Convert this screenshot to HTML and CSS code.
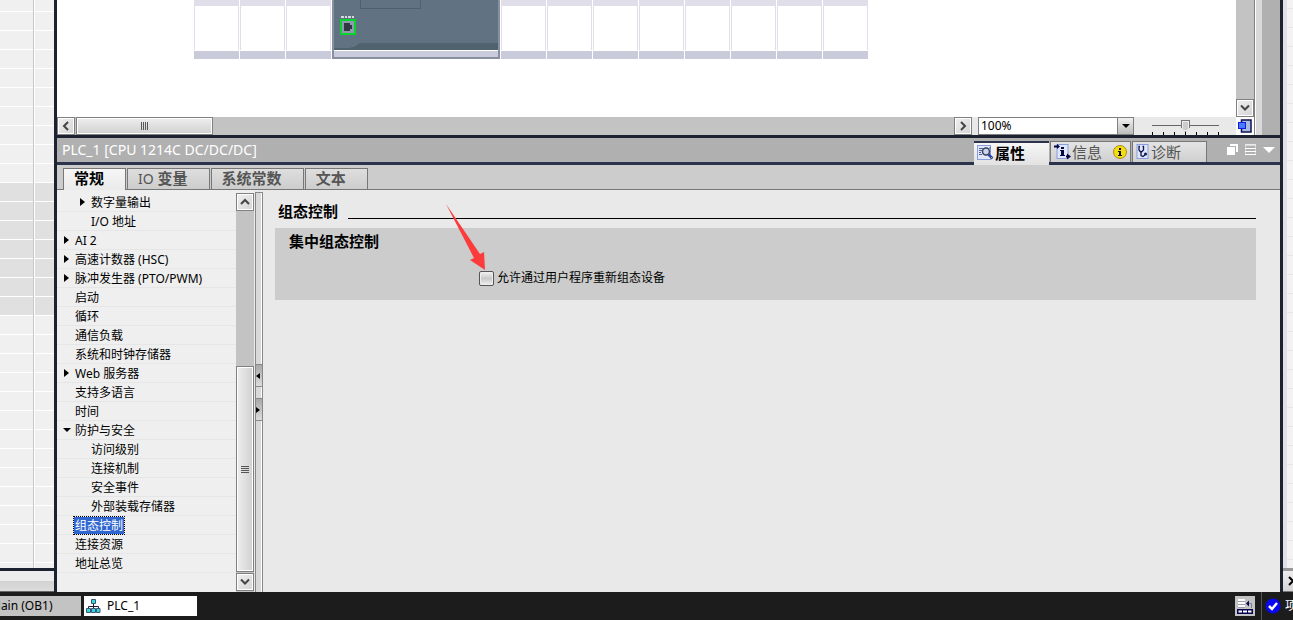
FILE: index.html
```html
<!DOCTYPE html>
<html lang="zh-CN">
<head>
    <meta charset="UTF-8">
    <meta name="viewport" content="width=device-width, initial-scale=1.0">
    <title>PLC_1</title>
    <link rel="stylesheet" href="styles.css">
</head>
<body>
    <div class="work">
        <div class="side-left">
            <div class="side-grid"></div>
            <div class="side-foot"></div>
        </div>
        <div class="main">
            <div class="editor">
                <div class="editor-view">
                    <div class="canvas">
                        <div class="rack">
                            <div class="slot"></div>
                            <div class="slot"></div>
                            <div class="slot"></div>
                            <svg class="cpu" width="168" height="59" viewBox="0 0 168 59">
                                <rect width="168" height="59" fill="#8690a0"/>
                                <rect x="2" width="164" height="50" fill="#617383"/>
                                <path d="M2 48H18L20 47H22L28 43H166V50H2z" fill="#51626f"/>
                                <path d="M28.500 0V8.500H88.500V0" fill="none" stroke="#4f616f"/>
                                <path d="M9 17H23" stroke="#d5d8dc" stroke-width="2" stroke-dasharray="3 1 2 1"/>
                                <rect x="9" y="20" width="14" height="14" fill="#8f9aae" stroke="#06d42c" stroke-width="2"/>
                                <path d="M12 23H18V25H20V29H18V31H12z" fill="#333845"/>
                                <rect x="2" y="50" width="164" height="1" fill="#fff"/>
                                <rect x="2" y="51" width="164" height="6" fill="#cacbdb"/>
                            </svg>
                            <div class="slot"></div>
                            <div class="slot"></div>
                            <div class="slot"></div>
                            <div class="slot"></div>
                            <div class="slot"></div>
                            <div class="slot"></div>
                            <div class="slot"></div>
                            <div class="slot"></div>
                        </div>
                    </div>
                    <div class="vbar">
                        <button class="sbtn" type="button" aria-label="向下滚动"><svg width="10" height="8" viewBox="0 0 10 8"><path d="M1 1.500L5 5.500L9 1.500" /></svg></button>
                    </div>
                    <div class="hrow">
                        <div class="hbar">
                            <button class="sbtn" type="button" aria-label="向左滚动"><svg width="8" height="10" viewBox="0 0 8 10"><path d="M6 1L2 5L6 9"/></svg></button>
                            <div class="hthumb"><i class="grip-v"></i></div>
                            <button class="sbtn right" type="button" aria-label="向右滚动"><svg width="8" height="10" viewBox="0 0 8 10"><path d="M2 1L6 5L2 9"/></svg></button>
                        </div>
                        <div class="zoom-box">
                            <select class="zoom" aria-label="缩放">
                                <option>100%</option>
                            </select>
                            <span class="zoom-arrow"><svg width="8" height="4" viewBox="0 0 8 4"><path d="M0 0H8L4 4z"/></svg></span>
                        </div>
                        <input class="slider" type="range" min="0" max="6" value="3" aria-label="缩放滑块">
                    </div>
                    <button class="overview" type="button" aria-label="概览">
                        <svg width="14" height="14" viewBox="0 0 14 14">
                            <rect x="3.500" y="1" width="9.500" height="12" fill="#aab8e2" stroke="#0b1050" stroke-width="1.500"/>
                            <rect x="0.500" y="3.500" width="7" height="6" fill="#4b78ff" stroke="#0a1ee0"/>
                        </svg>
                    </button>
                </div>
                <div class="editor-edge"></div>
            </div>

            <div class="title-bar">
                <h1 class="title">PLC_1 [CPU 1214C DC/DC/DC]</h1>
                <div class="view-tabs">
                    <button class="vtab on" type="button">
                        <svg width="17" height="16" viewBox="0 0 17 16">
                            <rect x="0.500" y="0.500" width="13" height="14" fill="#dfe7fa" stroke="#8a9cdb"/>
                            <path d="M2 3.500H6M2 5.500H5M2 7.500H4M2 9.500H5M13 2V4" stroke="#4d5f9d"/>
                            <circle cx="9" cy="6.500" r="3.500" fill="#c9d6f2" stroke="#3c3f55" stroke-width="1.500"/>
                            <path d="M11.500 9.500L15.500 13.500" stroke="#2446b8" stroke-width="2.500"/>
                            <path d="M13.500 13.500L15.500 11.500" stroke="#c99b22"/>
                        </svg>
                        <span>属性</span>
                    </button>
                    <button class="vtab info" type="button">
                        <svg width="17" height="16" viewBox="0 0 17 16">
                            <rect x="3" y="0.500" width="11" height="14" fill="#dfe7fa" stroke="#8a9cdb"/>
                            <path d="M0 2.500H4M12 12.500H15" stroke="#060646" stroke-width="2"/>
                            <path d="M3 0L6 2.500L3 5zM13 9.500L17 12.500L13 15.500z" fill="#060646"/>
                            <path d="M7 3H10V5H7zM6 6H10V11H11V12H6V11H7V7H6z" fill="#060646"/>
                        </svg>
                        <span>信息</span>
                        <svg class="badge" width="14" height="14" viewBox="0 0 14 14">
                            <circle cx="7" cy="7" r="6.500" fill="#f4dc14" stroke="#a88f10"/>
                            <path d="M6 3H8V5H6zM5 6H8V10H9V11H5V10H6V7H5z" fill="#111"/>
                        </svg>
                    </button>
                    <button class="vtab" type="button">
                        <svg width="14" height="16" viewBox="0 0 14 16">
                            <rect x="1" y="0.500" width="11" height="14" fill="#dfe7fa" stroke="#8a9cdb"/>
                            <path d="M4 2.500H3V6L5 8.500L7.500 6V2.500H6.500M5 8.500V11.500L7 12.500L9 11" fill="none" stroke="#10174e" stroke-width="1.300"/>
                            <circle cx="9.500" cy="10" r="1.500" fill="#10174e"/>
                        </svg>
                        <span>诊断</span>
                    </button>
                </div>
                <div class="win-btns">
                    <button type="button" aria-label="浮动"><svg width="12" height="12" viewBox="0 0 12 12"><path d="M3 0H11V8H9V2H3z" fill="#fff"/><path d="M0 3H8V11H0z" fill="#fff"/></svg></button>
                    <button type="button" aria-label="列表"><svg width="12" height="12" viewBox="0 0 12 12"><path d="M0.500 0.500H10.500V10.500H0.500z" fill="none" stroke="#d5d5d5"/><path d="M0 1H11M0 4.500H11M0 7.500H11M0 10.500H11" stroke="#fff"/></svg></button>
                    <button type="button" aria-label="折叠"><svg width="12" height="7" viewBox="0 0 12 7"><path d="M0 0H12L6 6z" fill="#fff"/></svg></button>
                </div>
            </div>

            <div class="tabs">
                <button class="tab on" type="button">常规</button>
                <button class="tab" type="button"><span class="en">IO</span> 变量</button>
                <button class="tab" type="button">系统常数</button>
                <button class="tab" type="button">文本</button>
            </div>

            <div class="props">
                <ul class="tree">
                    <li class="lv2 close"><a href="#">数字量输出</a></li>
                    <li class="lv2"><a href="#">I/O 地址</a></li>
                    <li class="close"><a href="#">AI 2</a></li>
                    <li class="close"><a href="#">高速计数器 (HSC)</a></li>
                    <li class="close"><a href="#">脉冲发生器 (PTO/PWM)</a></li>
                    <li><a href="#">启动</a></li>
                    <li><a href="#">循环</a></li>
                    <li><a href="#">通信负载</a></li>
                    <li><a href="#">系统和时钟存储器</a></li>
                    <li class="close"><a href="#">Web 服务器</a></li>
                    <li><a href="#">支持多语言</a></li>
                    <li><a href="#">时间</a></li>
                    <li class="open"><a href="#">防护与安全</a></li>
                    <li class="lv2"><a href="#">访问级别</a></li>
                    <li class="lv2"><a href="#">连接机制</a></li>
                    <li class="lv2"><a href="#">安全事件</a></li>
                    <li class="lv2"><a href="#">外部装载存储器</a></li>
                    <li><a class="cur" href="#">组态控制</a></li>
                    <li><a href="#">连接资源</a></li>
                    <li><a href="#">地址总览</a></li>
                </ul>
                <div class="tree-bar">
                    <button class="sbtn" type="button" aria-label="向上滚动"><svg width="10" height="8" viewBox="0 0 10 8"><path d="M1 6L5 2L9 6"/></svg></button>
                    <div class="space"></div>
                    <div class="vthumb"><i class="grip-h"></i></div>
                    <button class="sbtn" type="button" aria-label="向下滚动"><svg width="10" height="8" viewBox="0 0 10 8"><path d="M1 1.500L5 5.500L9 1.500"/></svg></button>
                </div>
                <div class="splitter">
                    <button type="button" aria-label="向左折叠"><svg width="4" height="6" viewBox="0 0 4 6"><path d="M4 0V6L0 3z"/></svg></button>
                    <button type="button" aria-label="向右展开"><svg width="4" height="6" viewBox="0 0 4 6"><path d="M0 0V6L4 3z"/></svg></button>
                </div>
                <div class="content">
                    <h2 class="head">组态控制</h2>
                    <div class="group">
                        <h3>集中组态控制</h3>
                        <div class="check-row">
                            <input type="checkbox" id="allow">
                            <label for="allow">允许通过用户程序重新组态设备</label>
                        </div>
                    </div>
                    <svg class="arrow" width="42" height="70" viewBox="0 0 42 70">
                        <path d="M1 1L35 51L39 49L40 67L25 57L29 55z" fill="#fb3c3a"/>
                    </svg>
                </div>
            </div>
        </div>
        <div class="side-right">
            <div class="right-grid"></div>
            <button class="right-btn" type="button" aria-label="向右滚动"><svg width="7" height="10" viewBox="0 0 7 10"><path d="M1 1L5 5L1 9" fill="none" stroke="#000" stroke-width="2"/></svg></button>
        </div>
    </div>

    <div class="taskbar">
        <button class="task main-task" type="button">Main (OB1)</button>
        <button class="task on" type="button">
            <svg width="15" height="16" viewBox="0 0 15 16">
                <path d="M7.500 5V8.500M2.500 11V8.500H12.500V11M7.500 8V11" fill="none" stroke="#1c2244"/>
                <path d="M5.500 1.500H9.500V5.500H5.500zM0.500 10.500H4.500V14.500H0.500zM5.500 10.500H9.500V14.500H5.500zM10.500 10.500H14V14.500H10.500z" fill="#35d9e6" stroke="#3c5670"/>
            </svg>
            PLC_1
        </button>
        <div class="status">
            <button class="status-btn" type="button" aria-label="显示窗口">
                <svg width="16" height="16" viewBox="0 0 16 16">
                    <path d="M1 1H8V10H1z" fill="#fff"/>
                    <path d="M1 3.500H8M1 6.500H8M1 9.500H8" stroke="#9b9bb5"/>
                    <path d="M0 11H16V16H0z" fill="#050550"/>
                    <path d="M1.500 13.500H5M6 13.500H10M11 13.500H14.500" stroke="#fff" stroke-width="2"/>
                    <path d="M14.500 10V5.500H11" fill="none" stroke="#8080a0"/>
                    <path d="M9 5.500L12 2.500V8.500z" fill="#050550"/>
                </svg>
            </button>
            <span class="msg">
                <svg width="16" height="16" viewBox="0 0 16 16">
                    <circle cx="8" cy="8" r="7.500" fill="#0808f0"/>
                    <path d="M4 8L7 11L12 5" fill="none" stroke="#fff" stroke-width="2.500"/>
                </svg>
                <span>项</span>
            </span>
        </div>
    </div>
</body>
</html>
```
FILE: styles.css
```css
* {
    padding: 0;
    margin: 0;
    box-sizing: border-box;
    list-style: none;
}
body {
    display: flex;
    flex-direction: column;
    height: 100vh;
    overflow: hidden;
    font: 12px/18px "Noto Sans", "Noto Sans CJK SC", sans-serif;
    color: #000;
    background-color: #1c1c1c;
}
button, input, select {
    font: inherit;
    color: inherit;
    border: 0;
    border-radius: 0;
    background: none;
}
svg {
    display: block;
    flex: none;
}
a {
    color: inherit;
    text-decoration: none;
}
.work {
    display: flex;
    flex: 1;
    min-height: 0;
}

/* left project table */
.side-left {
    display: flex;
    flex-direction: column;
    flex: none;
    width: 54px;
}
.side-grid {
    flex: 1;
    background:
        linear-gradient(#c8c8c8, #c8c8c8) 33px 0 / 1px 100% no-repeat,
        linear-gradient(#fff, #fff) 34px 0 / 1px 100% no-repeat,
        repeating-linear-gradient(transparent 0 11px, #fff 11px 12px, transparent 12px 19px),
        linear-gradient(#e0e0e0, #e0e0e0) 0 183px / 100% 132px no-repeat,
        #f0f0f0;
}
.side-foot {
    height: 24px;
    border-top: 3px solid #1c2230;
    border-bottom: 1px solid #666;
    background: linear-gradient(#ececec 50%, #d2d2d2 50%, #dcdcdc);
}

.main {
    display: flex;
    flex-direction: column;
    flex: 1;
    min-width: 0;
    border: solid #1c2230;
    border-width: 0 3px;
}

/* device view */
.editor {
    display: flex;
    height: 138px;
    border-bottom: 3px solid #1c2230;
    flex: none;
}
.editor-view {
    flex: 1;
    display: grid;
    grid-template-columns: 1fr 18px;
    grid-template-rows: 1fr 18px;
    min-width: 0;
}
.editor-edge {
    width: 26px;
    border-left: 1px solid #808080;
    background: linear-gradient(90deg, #fff 1px, #d9d9d9 1px 7px, #b0b0b0 7px);
}
.canvas {
    background-color: #fff;
    overflow: hidden;
}
.rack {
    display: flex;
    gap: 1px;
    padding-left: 137px;
}
.slot {
    flex: none;
    width: 45px;
    height: 59px;
    border: solid #e0dfe9;
    border-width: 6px 1px 0;
    background: linear-gradient(#fff 45px, #cacbda 45px);
    border-image: linear-gradient(#e0dfe9 50px, #fff 50px 51px, #cacbda 51px) 6 1 0;
}
.vbar {
    display: flex;
    align-items: flex-end;
    background-color: #c3c3c3;
}
.sbtn {
    display: flex;
    align-items: center;
    justify-content: center;
    flex: none;
    width: 18px;
    height: 18px;
    border: 1px solid #808080;
    box-shadow: inset 0 0 0 1px #fff;
    background: linear-gradient(135deg, #f0f0f0, #d4d4d4);
}
.sbtn path {
    fill: none;
    stroke: #444;
    stroke-width: 2;
}
.hrow {
    display: flex;
    align-items: center;
    background-color: #e9e9e9;
}
.hbar {
    display: flex;
    flex: 1;
    gap: 1px;
    background-color: #c3c3c3;
}
.hbar .right {
    margin-left: auto;
}
.hthumb {
    display: flex;
    align-items: center;
    justify-content: center;
    width: 137px;
    border: 1px solid #808080;
    box-shadow: inset 0 0 0 1px #fff;
    background: linear-gradient(#eee, #d0d0d0);
}
.grip-v {
    width: 7px;
    height: 8px;
    background: repeating-linear-gradient(90deg, #555 0 1px, transparent 1px 2px);
}
.zoom-box {
    position: relative;
    width: 156px;
    height: 18px;
    margin-left: 6px;
}
.zoom {
    width: 100%;
    height: 18px;
    padding-left: 2px;
    border: 1px solid #808080;
    background-color: #fff;
    appearance: none;
    line-height: 16px;
}
.zoom-arrow {
    position: absolute;
    top: 0;
    right: 0;
    display: flex;
    align-items: center;
    justify-content: center;
    width: 17px;
    height: 18px;
    border: 1px solid #808080;
    background: linear-gradient(#f0f0f0, #bdbdbd);
    pointer-events: none;
}
.slider {
    width: 75px;
    height: 18px;
    margin: 0 13px 0 14px;
    appearance: none;
    background:
        linear-gradient(#666, #666) 4px 8px / 67px 1px no-repeat,
        repeating-linear-gradient(90deg, #000 0 1px, transparent 1px 11px) 4px 15px / 67px 3px no-repeat;
}
.slider::-webkit-slider-thumb {
    appearance: none;
    width: 9px;
    height: 12px;
    border: 1px solid #777;
    background-color: #ccc;
    box-shadow: inset 0 0 0 1px #eee;
    clip-path: polygon(0 0, 100% 0, 100% 60%, 50% 100%, 0 60%);
}
.overview {
    display: flex;
    align-items: center;
    justify-content: center;
    background-color: #fff;
}

/* inspector title */
.title-bar {
    display: flex;
    flex: none;
    height: 27px;
    border-bottom: 3px solid #2b334c;
    background-color: #b0b0b0;
}
.title {
    flex: 1;
    padding-left: 5px;
    font-size: 14px;
    font-weight: 400;
    line-height: 24px;
    color: #fff;
}
.view-tabs {
    display: flex;
    align-items: flex-start;
    gap: 1px;
    padding-top: 3px;
}
.vtab {
    display: flex;
    align-items: center;
    gap: 1px;
    width: 75px;
    height: 21px;
    padding-left: 3px;
    border: solid #777;
    border-width: 1px 1px 0;
    background: linear-gradient(#e4e4e4, #cfcfcf);
    color: #555;
    font-size: 15px;
    line-height: 20px;
}
.vtab.info {
    width: 81px;
}
.vtab .badge {
    margin-left: 10px;
}
.vtab.on {
    height: 24px;
    padding-bottom: 3px;
    border: 0;
    border-top: 2px solid #2b334c;
    background: linear-gradient(#f6f6f6, #e2e2e2);
    color: #000;
    font-weight: 700;
}
.win-btns {
    display: flex;
    align-items: center;
    gap: 6px;
    padding: 0 5px 0 20px;
}

/* inspector tabs */
.tabs {
    display: flex;
    align-items: flex-end;
    flex: none;
    gap: 1px;
    height: 25px;
    padding-left: 6px;
    border-bottom: 1px solid #777;
    background-color: #ccc;
}
.tab {
    height: 21px;
    padding: 0 21px 2px 10px;
    border: solid #777;
    border-width: 1px 1px 0;
    background: linear-gradient(#dedede, #cdcdcd);
    color: #555;
    font-size: 15px;
    font-weight: 700;
    line-height: 18px;
}
.tab .en {
    font-weight: 400;
    font-size: 14px;
}
.tab.on {
    height: 22px;
    margin-bottom: -1px;
    padding-bottom: 3px;
    background: linear-gradient(#f6f6f6, #eaeaea);
    color: #000;
}

.props {
    display: flex;
    flex: 1;
    min-height: 0;
    background-color: #e9e9e9;
}
.tree {
    flex: none;
    width: 179px;
    padding-top: 3px;
    background-color: #efefef;
}
.tree li {
    display: flex;
    align-items: center;
    height: 19px;
    padding-left: 6px;
    border-bottom: 1px solid #e6e6e6;
    white-space: nowrap;
}
.tree li.lv2 {
    padding-left: 22px;
}
.tree li::before {
    content: "";
    flex: none;
    width: 8px;
    height: 8px;
    margin-right: 3px;
}
.tree li.close::before {
    background-color: #000;
    clip-path: polygon(1px 0, 6px 4px, 1px 8px);
}
.tree li.open::before {
    background-color: #000;
    clip-path: polygon(0 2px, 8px 2px, 4px 6px);
}
.tree a {
    padding: 0 1px;
    line-height: 17px;
}
.tree a.cur {
    outline: 1px dotted #000;
    background-color: #2f66d0;
    color: #fff;
}
.tree-bar {
    display: flex;
    flex-direction: column;
    flex: none;
    width: 18px;
    padding: 3px 0 1px;
    background: linear-gradient(#efefef 3px, #c3c3c3 3px);
}
.tree-bar .space {
    flex: 156;
}
.vthumb {
    display: flex;
    align-items: center;
    justify-content: center;
    flex: 205;
    margin-bottom: 1px;
    border: 1px solid #808080;
    box-shadow: inset 0 0 0 1px #fff;
    background: linear-gradient(90deg, #eee, #d0d0d0);
}
.grip-h {
    width: 8px;
    height: 7px;
    background: repeating-linear-gradient(#555 0 1px, transparent 1px 2px);
}
.splitter {
    display: flex;
    flex-direction: column;
    align-items: stretch;
    justify-content: center;
    flex: none;
    gap: 11px;
    width: 8px;
    margin: 2px 0 0 1px;
    border: 1px solid #888;
    border-bottom: 0;
    background-color: #d9d9d9;
    box-shadow: inset -1px 0 0 #fff;
}
.splitter button {
    display: flex;
    align-items: center;
    height: 23px;
    border: solid #888;
    border-width: 1px 0;
    background: linear-gradient(#a8a8a8, #dcdcdc);
}

.content {
    position: relative;
    flex: 1;
    padding: 11px 24px 0 12px;
}
.head {
    display: flex;
    gap: 10px;
    padding-left: 3px;
    font-size: 15px;
    line-height: 20px;
}
.head::after {
    content: "";
    flex: 1;
    height: 17px;
    border-bottom: 1px solid #000;
}
.group {
    min-height: 72px;
    margin-top: 7px;
    padding: 3px 14px 12px;
    background-color: #ccc;
}
.group h3 {
    font-size: 15px;
    line-height: 20px;
}
.check-row {
    display: flex;
    align-items: center;
    gap: 3px;
    margin-top: 18px;
    padding-left: 190px;
}
.check-row input {
    width: 15px;
    height: 15px;
    appearance: none;
    border: 1px solid #555;
    border-radius: 2px;
    box-shadow: inset 0 0 0 1px #eee;
    background: linear-gradient(#f2f2f2, #c9c9c9 50%, #f0f0f0);
}
.arrow {
    position: absolute;
    top: 13px;
    left: 182px;
}

/* right edge */
.side-right {
    display: flex;
    flex-direction: column;
    flex: none;
    width: 10px;
    overflow: hidden;
}
.right-grid {
    flex: 1;
    border-left: 4px solid #e2e0e4;
    background: repeating-linear-gradient(#f3f3f3 0 8px, #e6e6e6 8px 9px, #f3f3f3 9px 19px);
}
.right-btn {
    height: 24px;
    padding-left: 5px;
    border-top: 3px solid #999;
    border-bottom: 1px solid #777;
    background: linear-gradient(#eee, #d4d4d4);
}

/* bottom bar */
.taskbar {
    display: flex;
    align-items: center;
    flex: none;
    gap: 3px;
    height: 28px;
    overflow: hidden;
}
.task {
    display: flex;
    align-items: center;
    flex: none;
    gap: 6px;
    height: 20px;
    background-color: #c3c3c3;
}
.main-task {
    width: 91px;
    margin-left: -10px;
}
.task.on {
    width: 113px;
    padding-left: 2px;
    background-color: #fff;
}
.status {
    display: flex;
    align-items: center;
    gap: 6px;
    width: 58px;
    margin-left: auto;
}
.status-btn {
    display: flex;
    align-items: center;
    justify-content: center;
    flex: none;
    width: 20px;
    height: 20px;
    background-color: #c3c3c3;
}
.msg {
    display: flex;
    align-items: center;
    flex: none;
    gap: 4px;
    height: 28px;
    padding-left: 3px;
    border-left: 1px solid #555;
    color: #fff;
    white-space: nowrap;
}
```
